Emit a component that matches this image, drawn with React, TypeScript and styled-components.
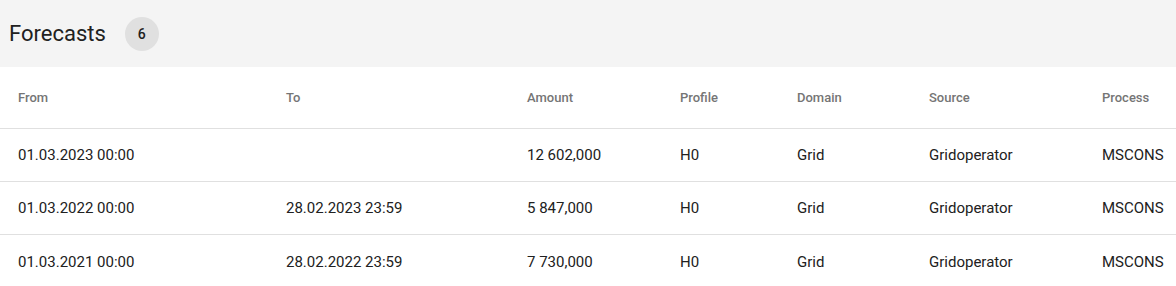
import React from 'react';
import styled, { createGlobalStyle } from 'styled-components';

interface Forecast {
  from: string;
  to: string;
  amount: string;
  profile: string;
  domain: string;
  source: string;
  process: string;
}

const forecasts: Forecast[] = [
  { from: '01.03.2023 00:00', to: '', amount: '12 602,000', profile: 'H0', domain: 'Grid', source: 'Gridoperator', process: 'MSCONS' },
  { from: '01.03.2022 00:00', to: '28.02.2023 23:59', amount: '5 847,000', profile: 'H0', domain: 'Grid', source: 'Gridoperator', process: 'MSCONS' },
  { from: '01.03.2021 00:00', to: '28.02.2022 23:59', amount: '7 730,000', profile: 'H0', domain: 'Grid', source: 'Gridoperator', process: 'MSCONS' },
];

const columns = ['From', 'To', 'Amount', 'Profile', 'Domain', 'Source', 'Process'];

const GlobalStyle = createGlobalStyle`
  body {
    margin: 0;
    background: #ffffff;
    font-family: Roboto, "Liberation Sans", sans-serif;
    overflow: hidden;
  }
`;

const Panel = styled.section`
  width: 1176px;
`;

const Header = styled.header`
  display: flex;
  align-items: center;
  gap: 19px;
  height: 67px;
  padding: 0 9px;
  background: #f4f4f4;
  box-sizing: border-box;
`;

const Title = styled.h2`
  margin: 0;
  font-size: 22px;
  font-weight: 400;
  color: #212121;
`;

const CountBadge = styled.span`
  display: flex;
  align-items: center;
  justify-content: center;
  width: 34px;
  height: 34px;
  border-radius: 50%;
  background: #e0e0e0;
  font-size: 14px;
  font-weight: 500;
  color: #212121;
`;

const Row = styled.div<{ $head?: boolean }>`
  display: grid;
  grid-template-columns: 268px 241px 153px 117px 132px 173px 1fr;
  align-items: center;
  height: ${p => (p.$head ? 62 : 53)}px;
  border-bottom: 1px solid #e0e0e0;
  box-sizing: border-box;

  &:last-child {
    border-bottom: none;
  }
`;

const HeadCell = styled.div`
  padding-left: 18px;
  font-size: 13px;
  font-weight: 500;
  color: #757575;
`;

const Cell = styled.div`
  padding-left: 18px;
  font-size: 15px;
  color: #212121;
  white-space: nowrap;
`;

export default function App() {
  return (
    <Panel>
      <GlobalStyle />
      <Header>
        <Title>Forecasts</Title>
        <CountBadge>6</CountBadge>
      </Header>
      <Row $head>
        {columns.map(c => (
          <HeadCell key={c}>{c}</HeadCell>
        ))}
      </Row>
      {forecasts.map(f => (
        <Row key={f.from}>
          <Cell>{f.from}</Cell>
          <Cell>{f.to}</Cell>
          <Cell>{f.amount}</Cell>
          <Cell>{f.profile}</Cell>
          <Cell>{f.domain}</Cell>
          <Cell>{f.source}</Cell>
          <Cell>{f.process}</Cell>
        </Row>
      ))}
    </Panel>
  );
}
